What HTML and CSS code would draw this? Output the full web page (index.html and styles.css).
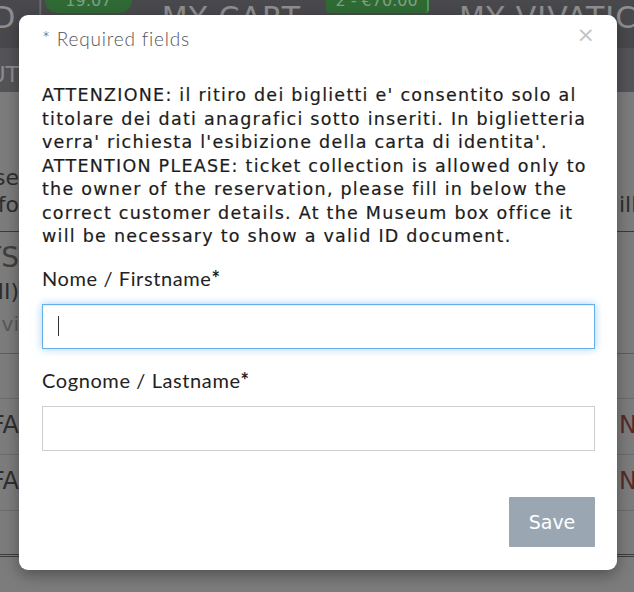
FILE: index.html
```html
<!DOCTYPE html>
<html lang="it">
<head>
<meta charset="utf-8">
<title>Required fields</title>
<link rel="stylesheet" href="styles.css">
</head>
<body>
<div class="page">
  <header class="nav">
    <span class="nav-word nav-d">CARD</span>
    <span class="nav-sep">|</span>
    <span class="pill pill-time">19:07</span>
    <span class="nav-word nav-cart">MY CART</span>
    <span class="pill pill-cart">2 - €70.00</span>
    <span class="nav-word nav-my">MY VIVATICKET</span>
  </header>
  <div class="subnav"><span class="edge-l"><span>ABOUT</span></span></div>
  <main class="content">
    <div class="row row-info">
      <span class="edge-l"><span>Please</span><span>Info</span></span>
      <span class="edge-r"><span>&nbsp;</span><span>ill</span></span>
    </div>
    <div class="row row-title">
      <span class="edge-l"><span class="big">TICKETS</span><span>(MI)</span><span class="light">Vivi</span></span>
    </div>
    <div class="row row-empty"></div>
    <div class="row row-line">
      <span class="edge-l">FA</span><span class="edge-r red">NO</span>
    </div>
    <div class="row row-line">
      <span class="edge-l">FA</span><span class="edge-r red">NO</span>
    </div>
    <div class="row row-last"></div>
  </main>
</div>

<div class="modal" role="dialog">
  <div class="modal-head">
    <span class="req">* Required fields</span>
    <span class="close">×</span>
  </div>
  <p class="notice">ATTENZIONE: il ritiro dei biglietti e' consentito solo al<br>titolare dei dati anagrafici sotto inseriti. In biglietteria<br>verra' richiesta l'esibizione della carta di identita'.<br>ATTENTION PLEASE: ticket collection is allowed only to<br>the owner of the reservation, please fill in below the<br>correct customer details. At the Museum box office it<br>will be necessary to show a valid ID document.</p>
  <label class="field-label" for="fn">Nome / Firstname<b>*</b></label>
  <div class="input-wrap">
    <input id="fn" class="input focused" type="text">
    <span class="caret"></span>
  </div>
  <label class="field-label second" for="ln">Cognome / Lastname<b>*</b></label>
  <div class="input-wrap">
    <input id="ln" class="input" type="text">
  </div>
  <div class="actions">
    <button class="save" type="button">Save</button>
  </div>
</div>
</body>
</html>
```
FILE: styles.css
```css
* { box-sizing: border-box; }
html, body { margin: 0; padding: 0; }
body {
  width: 634px;
  height: 592px;
  overflow: hidden;
  background: #7c7c7c;
  font-family: "DejaVu Sans", sans-serif;
  position: relative;
}
.page { width: 634px; }
.nav {
  height: 48px;
  background: #49494d;
  display: flex;
  align-items: flex-start;
  white-space: nowrap;
  overflow: hidden;
  color: #8e8e90;
}
.nav > * { flex-shrink: 0; }
.nav-word {
  font-family: "DejaVu Sans", sans-serif;
  font-size: 30px;
  line-height: 34px;
  letter-spacing: 1px;
  padding-top: 1px;
}
.nav-d { margin-left: -73px; }
.nav-sep { font-size: 22px; margin: -6px 0 0 20px; color: #6a6a6e; }
.pill {
  background: #2f6a35;
  color: #7fa083;
  border-radius: 0 0 14px 14px;
  font-size: 16px;
  height: 13px;
  line-height: 2px;
  overflow: hidden;
  text-align: center;
}
.pill-time { width: 87px; margin-left: 1px; }
.nav-cart { margin-left: 30px; }
.pill-cart {
  width: 103px;
  margin-left: 25px;
  border-radius: 0 0 4px 4px;
  border-right: 2px solid #4c9a55;
}
.nav-my { margin-left: 30px; }
.subnav {
  height: 44px;
  background: #545458;
  overflow: hidden;
  white-space: nowrap;
  display: flex;
  padding-top: 14px;
  font-size: 22px;
  line-height: 26px;
  color: #8d8d90;
}
.content { display: flex; flex-direction: column; }
.row {
  display: flex;
  justify-content: space-between;
  border-bottom: 1px solid #5d5d5d;
  color: #2e2e2e;
  font-size: 22px;
  white-space: nowrap;
}
.edge-l, .edge-r {
  width: 19px;
  overflow: hidden;
  display: flex;
  flex-direction: column;
}
.edge-l { align-items: flex-end; }
.edge-r { width: 17px; align-items: flex-start; padding-left: 2px; }
.row-info { height: 140px; padding-top: 72px; line-height: 27px; border-bottom: 1px solid #3a3a3a; }
.row-title { height: 122px; padding-top: 8px; line-height: 32px; }
.row-title .big { font-size: 28px; color: #3f3f3f; line-height: 36px; }
.row-title .light { color: #585858; font-size: 20px; }
.row-empty { height: 45px; border-bottom-color: #6c6c6c; }
.row-line { height: 56px; padding-top: 12px; line-height: 28px; font-size: 24px; border-bottom-color: #6c6c6c; }
.red { color: #5a2a2a; }
.row-last { height: 46px; border-bottom: 3px double #3d3d3d; }

.modal {
  position: absolute;
  left: 19px;
  top: 15px;
  width: 598px;
  height: 555px;
  background: #fff;
  border-radius: 9px;
  padding: 0 22px 0 23px;
  display: flex;
  flex-direction: column;
  box-shadow: 0 5px 15px rgba(0,0,0,.35);
}
.modal-head {
  display: flex;
  justify-content: space-between;
  align-items: center;
  padding-top: 12px;
  height: 36px;
}
.req {
  font-family: "Lato", sans-serif;
  font-weight: 300;
  font-size: 19px;
  line-height: 24px;
  letter-spacing: 0.8px;
  color: #555;
}
.close {
  font-family: "DejaVu Sans", sans-serif;
  font-size: 22px;
  color: #c4c4c4;
  margin-right: 0;
  margin-top: -10px;
}
.notice {
  margin: 33px 0 0;
  font-family: "DejaVu Sans", sans-serif;
  font-size: 17.5px;
  line-height: 23.5px;
  letter-spacing: 1.25px;
  color: #1c1c1c;
  -webkit-text-stroke: 0.2px #1c1c1c;
  white-space: nowrap;
}
.field-label {
  display: block;
  margin-top: 17px;
  font-family: "Lato", sans-serif;
  font-size: 20px;
  line-height: 24px;
  letter-spacing: 0.6px;
  color: #222;
}
.field-label b { font-weight: 700; }
.field-label.second { margin-top: 19px; }
.input-wrap { position: relative; margin-top: 14px; }
.input {
  display: block;
  width: 100%;
  height: 45px;
  border: 1px solid #cfcfcf;
  border-radius: 0;
  background: #fff;
  outline: none;
  font-size: 16px;
}
.input.focused {
  border-color: #66afe9;
  box-shadow: inset 0 1px 1px rgba(0,0,0,.075), 0 0 8px rgba(102,175,233,.6);
}
.caret {
  position: absolute;
  left: 16px;
  top: 12px;
  width: 1px;
  height: 20px;
  background: #333;
}
.actions {
  display: flex;
  justify-content: flex-end;
  margin-top: 46px;
}
.save {
  width: 86px;
  height: 50px;
  border: none;
  border-radius: 1px;
  background: #9aa7b2;
  color: #fff;
  font-family: "DejaVu Sans", sans-serif;
  font-size: 19px;
}
```
